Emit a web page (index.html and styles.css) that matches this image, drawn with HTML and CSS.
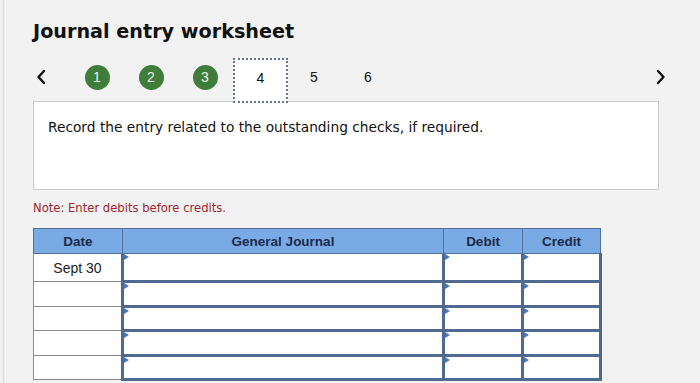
FILE: index.html
```html
<!DOCTYPE html>
<html lang="en">
<head>
<meta charset="utf-8">
<title>Journal entry worksheet</title>
<link rel="stylesheet" href="styles.css">
</head>
<body>
<div class="page">
  <h1 class="title">Journal entry worksheet</h1>
  <nav class="steps">
    <span class="chev">
      <svg width="10" height="16" viewBox="0 0 10 16"><path d="M8 2 L2.5 8 L8 14" fill="none" stroke="#111" stroke-width="2.4" stroke-linecap="round" stroke-linejoin="round"/></svg>
    </span>
    <span class="slot first"><span class="done">1</span></span>
    <span class="slot"><span class="done">2</span></span>
    <span class="slot"><span class="done">3</span></span>
    <span class="current">4</span>
    <span class="slot plain">5</span>
    <span class="slot plain">6</span>
    <span class="chev next">
      <svg width="10" height="16" viewBox="0 0 10 16"><path d="M2 2 L7.5 8 L2 14" fill="none" stroke="#111" stroke-width="2.4" stroke-linecap="round" stroke-linejoin="round"/></svg>
    </span>
  </nav>
  <div class="question">Record the entry related to the outstanding checks, if required.</div>
  <p class="note">Note: Enter debits before credits.</p>
  <table class="journal">
    <thead>
      <tr>
        <th class="c-date">Date</th>
        <th class="c-gj">General Journal</th>
        <th class="c-debit">Debit</th>
        <th class="c-credit">Credit</th>
      </tr>
    </thead>
    <tbody>
      <tr class="r1"><td class="date">Sept 30</td><td class="in"></td><td class="in"></td><td class="in"></td></tr>
      <tr class="r2"><td class="date"></td><td class="in"></td><td class="in"></td><td class="in"></td></tr>
      <tr class="r3"><td class="date"></td><td class="in"></td><td class="in"></td><td class="in"></td></tr>
      <tr class="r2"><td class="date"></td><td class="in"></td><td class="in"></td><td class="in"></td></tr>
      <tr class="r3"><td class="date"></td><td class="in"></td><td class="in"></td><td class="in"></td></tr>
    </tbody>
  </table>
</div>
</body>
</html>
```

FILE: styles.css
```css
html, body {
  margin: 0;
  padding: 0;
  background: #f2f2f2;
  height: 100%;
}
body {
  font-family: "DejaVu Sans", Verdana, sans-serif;
  color: #111;
  overflow: hidden;
}
.page {
  margin-left: 3px;
  border-left: 1px solid #d9d9d9;
  padding-left: 29px;
  height: 100%;
  box-sizing: border-box;
  padding-top: 20px;
}
.title {
  margin: 0;
  font-size: 19.2px;
  font-weight: bold;
  line-height: 24px;
  color: #111;
}
.steps {
  display: flex;
  align-items: center;
  height: 42px;
  width: 636px;
  margin-top: 12px;
  font-family: "Liberation Sans", Arial, sans-serif;
  font-size: 14px;
}
.chev {
  width: 16px;
  display: flex;
  justify-content: center;
}
.chev.next {
  margin-left: auto;
}
.slot {
  width: 54px;
  display: flex;
  justify-content: center;
}
.slot.first {
  margin-left: 21px;
}
.done {
  width: 25px;
  height: 25px;
  border-radius: 50%;
  background: #3f7d3a;
  color: #eef4ec;
  font-size: 14px;
  display: flex;
  align-items: center;
  justify-content: center;
}
.current {
  align-self: flex-start;
  width: 55px;
  height: 45px;
  margin-top: 2px;
  padding-bottom: 6px;
  box-sizing: border-box;
  border: 2px dotted #5d7598;
  background: #fff;
  display: flex;
  align-items: center;
  justify-content: center;
  position: relative;
  z-index: 1;
  margin-left: 1px;
  margin-right: -1px;
}
.plain {
  color: #111;
}
.question {
  margin-top: 3px;
  width: 626px;
  height: 89px;
  box-sizing: border-box;
  background: #fff;
  border: 1px solid #cbcbcb;
  padding: 16px 0 0 14px;
  font-size: 13.75px;
  line-height: 18px;
}
.note {
  margin: 11px 0 0;
  font-size: 11.6px;
  line-height: 14px;
  color: #a3242d;
}
.journal {
  margin-top: 13px;
  border-collapse: collapse;
  font-family: "Liberation Sans", Arial, sans-serif;
  table-layout: fixed;
}
.journal th {
  background: #79aae3;
  color: #1b2b4b;
  font-size: 13.5px;
  font-weight: bold;
  height: 24px;
  padding: 0;
  border: 1px solid #52729c;
}
.c-date { width: 88px; }
.c-gj { width: 320px; }
.c-debit { width: 78px; }
.c-credit { width: 77px; }
.journal td {
  background: #fff;
  padding: 0;
}
.journal td.date {
  border: 1px solid #8a8a8a;
  text-align: center;
  font-size: 14px;
  color: #222;
}
.journal td.in {
  border: 3px solid #4f6a91;
  border-top-width: 1px;
  position: relative;
}
.journal td.in::before {
  content: "";
  position: absolute;
  left: 0;
  top: 0;
  border-top: 3px solid transparent;
  border-bottom: 3px solid transparent;
  border-left: 5px solid #4a78b6;
}
.r1 { height: 28px; }
.r2 { height: 25px; }
.r3 { height: 24px; }
```
